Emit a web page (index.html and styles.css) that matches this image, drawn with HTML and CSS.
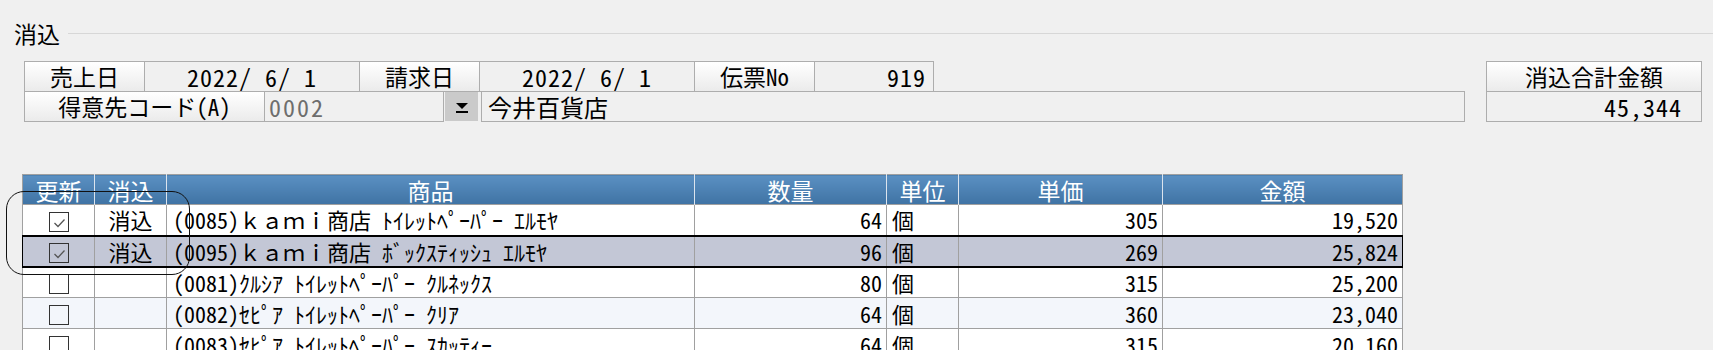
FILE: index.html
```html
<!DOCTYPE html>
<html lang="ja">
<head>
<meta charset="UTF-8">
<title>消込</title>
<link rel="stylesheet" href="styles.css">
</head>
<body>
<div class="legend"><span class="legend-text">消込</span><span class="legend-line"></span></div>

<div class="head">
    <div class="info">
        <div class="row">
            <div class="cell label w121">売上日</div>
            <div class="cell value w216">2022/ 6/ 1</div>
            <div class="cell label w121">請求日</div>
            <div class="cell value w216">2022/ 6/ 1</div>
            <div class="cell label w121">伝票No</div>
            <div class="cell value num w120">919</div>
        </div>
        <div class="row row2">
            <div class="cell label w241">得意先コード(A)</div>
            <div class="cell field code">0002</div>
            <div class="drop">
                <svg width="16" height="14" viewBox="0 0 16 14"><path d="M2 3h12l-6 6z" fill="#000"/><rect x="2" y="11" width="12" height="2" fill="#000"/></svg>
            </div>
            <div class="cell field name">今井百貨店</div>
        </div>
    </div>
    <div class="total">
        <div class="cell label">消込合計金額</div>
        <div class="cell value num">45,344</div>
    </div>
</div>

<table class="grid">
    <colgroup>
        <col class="c-upd"><col class="c-keshi"><col class="c-item"><col class="c-qty"><col class="c-unit"><col class="c-price"><col class="c-amount">
    </colgroup>
    <thead>
    <tr>
        <th>更新</th>
        <th>消込</th>
        <th>商品</th>
        <th>数量</th>
        <th>単位</th>
        <th>単価</th>
        <th>金額</th>
    </tr>
    </thead>
    <tbody>
    <tr>
        <td class="chk"><span class="box"><svg width="17" height="17" viewBox="0 0 17 17"><path d="M3.5 9l3.5 3.5 6.5-7" fill="none" stroke="#555" stroke-width="1.3"/></svg></span></td>
        <td class="center">消込</td>
        <td class="item">(0085)ｋａｍｉ商店 ﾄｲﾚｯﾄﾍﾟｰﾊﾟｰ ｴﾙﾓﾔ</td>
        <td class="num">64</td>
        <td class="unit">個</td>
        <td class="num">305</td>
        <td class="num">19,520</td>
    </tr>
    <tr class="selected">
        <td class="chk"><span class="box"><svg width="17" height="17" viewBox="0 0 17 17"><path d="M3.5 9l3.5 3.5 6.5-7" fill="none" stroke="#555" stroke-width="1.3"/></svg></span></td>
        <td class="center">消込</td>
        <td class="item">(0095)ｋａｍｉ商店 ﾎﾞｯｸｽﾃｨｯｼｭ ｴﾙﾓﾔ</td>
        <td class="num">96</td>
        <td class="unit">個</td>
        <td class="num">269</td>
        <td class="num">25,824</td>
    </tr>
    <tr>
        <td class="chk"><span class="box"></span></td>
        <td></td>
        <td class="item">(0081)ｸﾙｼｱ ﾄｲﾚｯﾄﾍﾟｰﾊﾟｰ ｸﾙﾈｯｸｽ</td>
        <td class="num">80</td>
        <td class="unit">個</td>
        <td class="num">315</td>
        <td class="num">25,200</td>
    </tr>
    <tr class="alt">
        <td class="chk"><span class="box"></span></td>
        <td></td>
        <td class="item">(0082)ｾﾋﾟｱ ﾄｲﾚｯﾄﾍﾟｰﾊﾟｰ ｸﾘｱ</td>
        <td class="num">64</td>
        <td class="unit">個</td>
        <td class="num">360</td>
        <td class="num">23,040</td>
    </tr>
    <tr>
        <td class="chk"><span class="box"></span></td>
        <td></td>
        <td class="item">(0083)ｾﾋﾟｱ ﾄｲﾚｯﾄﾍﾟｰﾊﾟｰ ｽｶｯﾃｨｰ</td>
        <td class="num">64</td>
        <td class="unit">個</td>
        <td class="num">315</td>
        <td class="num">20,160</td>
    </tr>
    </tbody>
</table>

<div class="mark"></div>
</body>
</html>
```

FILE: styles.css
```css
* {
	margin: 0;
	padding: 0;
	box-sizing: border-box;
}
body {
	background: #f0f0f0;
	color: #000;
	font-family: "Noto Sans Mono CJK JP", "Noto Sans CJK JP", monospace;
	font-size: 22px;
	position: relative;
	height: 350px;
	overflow: hidden;
}

/* 枠タイトル */
.legend {
	display: flex;
	align-items: center;
	height: 22px;
	margin-top: 22px;
	padding-left: 14px;
}
.legend-text {
	line-height: 22px;
	font-size: 23px;
}
.legend-line {
	flex: 1;
	height: 1px;
	margin-left: 8px;
	background: #d7d7d7;
}

/* 上部 */
.head {
	display: flex;
	justify-content: space-between;
	margin-top: 17px;
	padding: 0 11px 0 24px;
}
.row {
	display: flex;
}
.row2 {
	margin-top: -1px;
}
.cell {
	height: 31px;
	line-height: 29px;
	border: 1px solid #adadad;
	text-align: center;
	white-space: nowrap;
}
.row .cell + .cell {
	margin-left: -1px;
}
.label {
	font-size: 23px;
	background: linear-gradient(#ffffff, #ebebeb);
}
.value {
	font-size: 24px;
	letter-spacing: 1px;
	background: #f0f0f0;
}
.num {
	text-align: right;
	padding-right: 7px;
}
.w120 { width: 120px; }
.w121 { width: 121px; }
.w216 { width: 216px; }
.w241 { width: 241px; }

.field {
	font-size: 24px;
	background: #f0f0f0;
	text-align: left;
	padding-left: 4px;
}
.code {
	width: 180px;
	color: #6d6d6d;
	letter-spacing: 2px;
}
.drop {
	width: 33px;
	height: 29px;
	margin: 1px 0 0 1px;
	background: #cacaca;
	display: flex;
	align-items: center;
	justify-content: center;
}
.row .name {
	width: 984px;
	margin-left: 3px;
	padding-left: 6px;
}
.total {
	width: 216px;
}
.total .cell + .cell {
	margin-top: -1px;
}
.total .num {
	padding-right: 19px;
}

/* 明細 */
.grid {
	border-collapse: collapse;
	table-layout: fixed;
	width: 1380px;
	margin: 52px 0 0 22px;
}
.c-upd, .c-keshi, .c-unit { width: 72px; }
.c-item { width: 528px; }
.c-qty { width: 192px; }
.c-price { width: 204px; }
.c-amount { width: 240px; }

.grid th {
	height: 30px;
	font-size: 23px;
	font-weight: normal;
	color: #fff;
	background: linear-gradient(#5b90c2, #3f73a4);
	border: 1px solid #a0a0a0;
	border-left-color: #dbe4ee;
	border-right-color: #dbe4ee;
	border-bottom: none;
	line-height: 28px;
}
.grid th:first-child {
	border-left-color: #a0a0a0;
}
.grid th:last-child {
	border-right-color: #a0a0a0;
}
.grid td {
	height: 31px;
	line-height: 29px;
	border: 1px solid #a0a0a0;
	background: #fff;
	white-space: nowrap;
	overflow: hidden;
}
.grid .alt td {
	background: #f3f6fb;
}
.grid .selected td {
	background: #c3c7d6;
	border-top: 2px solid #000;
	border-bottom: 2px solid #000;
}
.grid .selected td:first-child {
	border-left: 1px solid #000;
}
.grid .selected td:last-child {
	border-right: 1px solid #000;
}
.grid .center {
	text-align: center;
}
.grid .item {
	padding-left: 6px;
}
.grid .num {
	text-align: right;
	padding-right: 4px;
}
.grid .unit {
	padding-left: 5px;
}
.chk {
	text-align: center;
}
.box {
	display: inline-block;
	width: 20px;
	height: 20px;
	border: 1px solid #333;
	vertical-align: middle;
	margin-top: -3px;
}
.box svg {
	display: block;
	margin: 1px;
}

/* 手書きの囲み */
.mark {
	position: absolute;
	left: 6px;
	top: 191px;
	width: 184px;
	height: 84px;
	border: 1.5px solid #111;
	border-radius: 18px;
	pointer-events: none;
}
```
